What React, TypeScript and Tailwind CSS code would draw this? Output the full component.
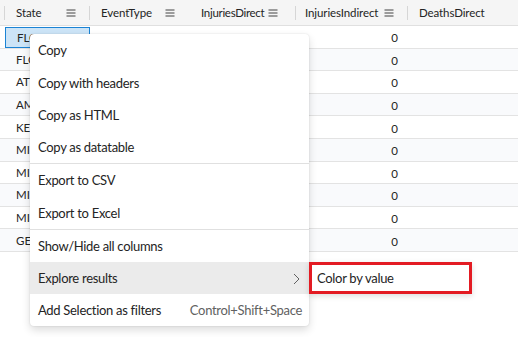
import React from "react";

const font = { fontFamily: '"Segoe UI", Lato, "Liberation Sans", sans-serif' };

function Ham() {
  return (
    <svg width="10" height="8" viewBox="0 0 10 8" className="shrink-0">
      <path d="M0.5 1H9.5M0.5 4H9.5M0.5 7H9.5" stroke="#424242" strokeWidth="1" />
    </svg>
  );
}

function Sep() {
  return <div className="w-px h-[14px] bg-[#d6d6d6] shrink-0" />;
}

const states = ["FLORIDA", "FLORIDA", "ATLANTIC SOUTH", "AMERICAN SAMOA", "KENTUCKY", "MISSISSIPPI", "MISSISSIPPI", "MISSISSIPPI", "MISSOURI", "GEORGIA"];

export default function App() {
  return (
    <div className="relative w-[518px] h-[337px] bg-white overflow-hidden text-[#242424]" style={font}>
      {/* header */}
      <div className="flex items-center h-[26px] bg-[#f5f5f5] border-b border-[#e0e0e0] text-[11.5px] tracking-[-0.1px] pl-[4px] whitespace-nowrap">
        <div className="flex items-center w-[85px] h-full">
          <Sep />
          <span className="pl-[11px]">State</span>
          <span className="ml-auto pr-[13px] flex"><Ham /></span>
        </div>
        <div className="flex items-center w-[100px] h-full">
          <Sep />
          <span className="pl-[11px]">EventType</span>
          <span className="ml-auto pr-[14px] flex"><Ham /></span>
        </div>
        <div className="flex items-center w-[106px] h-full">
          <span className="pl-[12px] tracking-[-0.3px]">InjuriesDirect</span>
          <span className="ml-auto pr-[17px] flex"><Ham /></span>
        </div>
        <div className="flex items-center w-[112px] h-full">
          <Sep />
          <span className="pl-[9px]">InjuriesIndirect</span>
          <span className="ml-auto pr-[13px] flex"><Ham /></span>
        </div>
        <div className="flex items-center flex-1 h-full">
          <Sep />
          <span className="pl-[11px]">DeathsDirect</span>
        </div>
      </div>
      {/* rows */}
      {states.map((s, i) => (
        <div
          key={i}
          className={`flex items-stretch h-[22.6px] border-b border-[#e3e3e3] text-[11.5px] pl-[5px] ${i % 2 === 1 ? "bg-[#f9fafc]" : "bg-white"}`}
        >
          <div
            className={`w-[85px] flex items-center pl-[11px] overflow-hidden whitespace-nowrap ${i === 0 ? "border border-[#1b83d4] bg-[#cce4f7] mt-[1px]" : ""}`}
          >
            {s}
          </div>
          <div className="w-[100px]" />
          <div className="w-[106px]" />
          <div className="w-[112px] flex items-center justify-end pr-[10px] pt-[2px]">0</div>
          <div className="flex-1" />
        </div>
      ))}

      {/* context menu */}
      <div className="absolute left-[30px] top-[34px] w-[279px] bg-white rounded-[4px] shadow-[0_0_2px_rgba(0,0,0,0.12),0_4px_8px_rgba(0,0,0,0.14)] text-[13px] tracking-[-0.3px] overflow-hidden whitespace-nowrap">
        {["Copy", "Copy with headers", "Copy as HTML", "Copy as datatable"].map((t) => (
          <div key={t} className="h-[32.25px] flex items-center px-[8px] pt-[2px]">{t}</div>
        ))}
        <div className="h-px bg-[#e0e0e0]" />
        {["Export to CSV", "Export to Excel"].map((t) => (
          <div key={t} className="h-[32.25px] flex items-center px-[8px] pt-[2px]">{t}</div>
        ))}
        <div className="h-px bg-[#e0e0e0]" />
        <div className="h-[32.25px] flex items-center px-[8px] pt-[2px]">Show/Hide all columns</div>
        <div className="h-[32.25px] flex items-center pl-[8px] pr-[9px] bg-[#ebebeb] pt-[2px]">
          <span>Explore results</span>
          <svg className="ml-auto" width="7" height="12" viewBox="0 0 7 12">
            <path d="M1 1L6 6L1 11" fill="none" stroke="#616161" strokeWidth="1" />
          </svg>
        </div>
        <div className="h-[32.25px] flex items-center pl-[8px] pr-[7px] pt-[2px]">
          <span>Add Selection as filters</span>
          <span className="ml-auto text-[#616161]">Control+Shift+Space</span>
        </div>
      </div>

      {/* submenu */}
      <div className="absolute left-[309px] top-[262px] w-[163px] h-[32px] bg-white border-[3px] border-[#e31b23] shadow-[0_2px_6px_rgba(0,0,0,0.14)] flex items-center pl-[5px] pt-[1px] text-[13px] tracking-[-0.3px] whitespace-nowrap">
        Color by value
      </div>
    </div>
  );
}
